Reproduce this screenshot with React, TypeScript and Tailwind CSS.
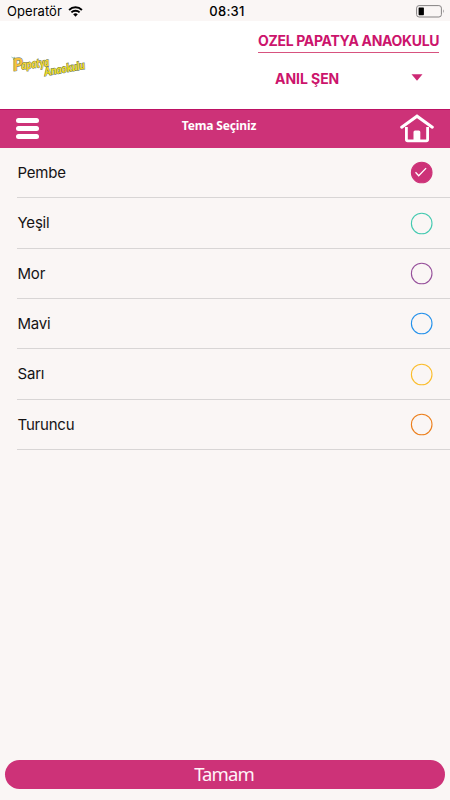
import React from 'react';

const themes = [
  { name: 'Pembe', color: '#cd3278', selected: true },
  { name: 'Yeşil', color: '#43c9b0' },
  { name: 'Mor', color: '#96509b' },
  { name: 'Mavi', color: '#2491eb' },
  { name: 'Sarı', color: '#fbbd2c' },
  { name: 'Turuncu', color: '#ec7f1c' },
];

const StatusBar: React.FC = () => (
  <div className="h-[21px] shrink-0 grid grid-cols-3 items-center pl-[7px] pr-[5px] text-black">
    <div className="flex items-center gap-[6px] pt-px">
      <span className="text-[13px] leading-4 tracking-[0.05px]">Operatör</span>
      <svg width="15" height="11" viewBox="0 0 16 12" fill="none" stroke="#000" strokeWidth="2.1">
        <path d="M1 4.4C5 .4 11 .4 15 4.4" />
        <path d="M3.5 7C6 4.6 10 4.6 12.5 7" />
        <path d="M5.5 9.1Q8 6.9 10.5 9.1L8 11.6Z" fill="#000" stroke="none" />
      </svg>
    </div>
    <span className="text-center text-[13px] leading-4 font-medium tracking-[0.25px] pt-px pl-[2px]">08:31</span>
    <svg className="justify-self-end mt-px" width="29" height="13" viewBox="0 0 29 13">
      <rect x=".6" y=".6" width="24.8" height="11.4" rx="2.5" fill="none" stroke="#858283" />
      <rect x="2.6" y="2.4" width="5.3" height="7.8" rx=".6" />
      <path d="M27 4.3Q28.7 6.3 27 8.3Z" fill="#858283" />
    </svg>
  </div>
);

const Logo: React.FC = () => (
  <svg
    className="overflow-visible"
    width="90"
    height="34"
    viewBox="0 0 90 34"
    fontFamily="Lato, sans-serif"
    fontStyle="italic"
    fontWeight="900"
    stroke="#59705a"
    strokeWidth="1"
    paintOrder="stroke"
  >
    <path d="M1.5 7l1.5 1 2-.8M3 9l1.5 1" stroke="#84b9b0" strokeWidth=".8" fill="none" />
    <g transform="rotate(-7 4 22)" fill="#f5d62a">
      <text x="3.5" y="21" fontSize="17" fill="#f6c13c">P</text>
      <text x="12" y="20.5" fontSize="12.5" textLength="28" lengthAdjust="spacingAndGlyphs">apatya</text>
    </g>
    <text x="35" y="26" fontSize="11.5" fill="#f1dc1e" textLength="41" lengthAdjust="spacingAndGlyphs" transform="rotate(-10 35 26)">
      Anaokulu
    </text>
  </svg>
);

const HomeIcon: React.FC = () => (
  <svg width="34" height="30" viewBox="0 0 34 30" fill="none" stroke="#fff">
    <path d="M1.7 13.2L17 2.2l15.3 11" strokeWidth="3" strokeLinecap="round" />
    <path d="M6.4 13v12.6q0 1.3 1.3 1.3h18.6q1.3 0 1.3-1.3V13" strokeWidth="2.8" />
    <path d="M13.5 26.5V18q0-1.5 1.5-1.5h3.8q1.5 0 1.5 1.5v8.5Z" fill="#fff" stroke="none" />
  </svg>
);

const App: React.FC = () => {
  return (
    <div className="w-full h-screen flex flex-col bg-[#faf6f5] text-[#151314] font-[Inter,sans-serif] overflow-hidden">
      <StatusBar />

      {/* School and student */}
      <header className="h-[88px] shrink-0 bg-white flex justify-between pl-[10px] pr-[11px]">
        <div className="pt-[29px]">
          <Logo />
        </div>
        <div className="w-[181px] text-[#cc146c] text-[14px] font-bold">
          <div className="h-[32px] border-b border-[#d7527f] pt-[10px] leading-5 whitespace-nowrap tracking-[-0.32px]">
            OZEL PAPATYA ANAOKULU
          </div>
          <div className="flex items-center justify-between pl-[17px] pr-[16px] pt-[16px] leading-5">
            <span className="tracking-[-0.05px]">ANIL ŞEN</span>
            <svg className="mb-[4px]" width="12" height="7" viewBox="0 0 12 7">
              <path d="M.5.3h11L6 6.7Z" fill="#cd2874" />
            </svg>
          </div>
        </div>
      </header>

      {/* Title bar */}
      <div className="h-[39px] shrink-0 bg-[#cd3278] border-t border-[#bd1264] flex items-center justify-between pl-4 pr-4 text-white">
        <div className="w-[34px] flex flex-col gap-[3px] mb-[2px]">
          <span className="w-[23px] h-[5px] rounded-full bg-white" />
          <span className="w-[23px] h-[5px] rounded-full bg-white" />
          <span className="w-[23px] h-[5px] rounded-full bg-white" />
        </div>
        <h1 className="font-['Noto_Sans',sans-serif] text-[12px] font-bold leading-4 tracking-[-0.15px] mb-[6px] -ml-[12px]">
          Tema Seçiniz
        </h1>
        <HomeIcon />
      </div>

      <ul className="flex-1">
        {themes.map((theme) => (
          <li
            key={theme.name}
            className="h-[50.33px] ml-[17px] pl-[0.5px] pr-[17px] pt-[0.5px] flex items-center justify-between border-b border-[#d8d5d5]"
          >
            <span className="text-[15px] leading-5 tracking-[-0.2px]">{theme.name}</span>
            <svg width="23" height="23" viewBox="0 0 23 23" fill="none">
              <circle cx="11.7" cy="11.5" r="10.3" stroke={theme.color} strokeWidth="1.1" fill={theme.selected ? theme.color : 'none'} />
              {theme.selected && <path d="M5.5 11.3l3.2 3.4 7.4-7.6" stroke="#fff" strokeWidth="1.3" />}
            </svg>
          </li>
        ))}
      </ul>

      <div className="px-[5px] pb-[11px]">
        <button className="block w-full h-[29px] rounded-full bg-[#cd3278] text-[#fff4f8] font-['Noto_Sans',sans-serif] text-[18.5px] leading-[27px] pb-[2px] tracking-[-0.9px] pr-[2px]">
          Tamam
        </button>
      </div>
    </div>
  );
};

export default App;
